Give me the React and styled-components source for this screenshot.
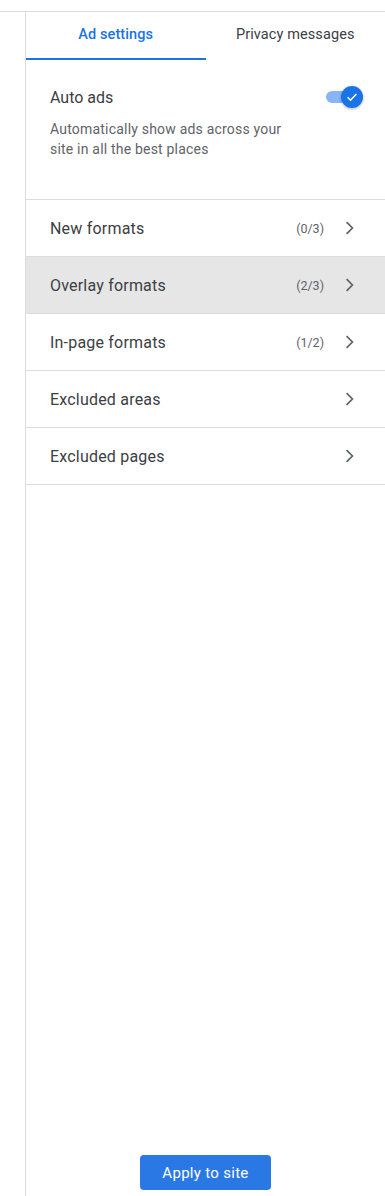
import React from "react";
import styled, { createGlobalStyle } from "styled-components";

const GlobalStyle = createGlobalStyle`
  html, body {
    margin: 0;
    padding: 0;
    background: #fff;
    font-family: Roboto, "Liberation Sans", Arial, sans-serif;
  }
`;

const rows = [
  { title: "New formats", count: "(0/3)" },
  { title: "Overlay formats", count: "(2/3)", active: true },
  { title: "In-page formats", count: "(1/2)" },
  { title: "Excluded areas" },
  { title: "Excluded pages" },
];

const Chevron = () => (
  <svg width="24" height="24" viewBox="0 0 24 24">
    <path d="M8.6 6.2 L14.4 12 L8.6 17.8" fill="none" stroke="#5f6368" strokeWidth="1.7" />
  </svg>
);

export const App = () => {
  return (
    <Page>
      <GlobalStyle />
      <Gutter />
      <Panel>
        <Tabs>
          <Tab active>Ad settings</Tab>
          <Tab>Privacy messages</Tab>
        </Tabs>
        <AutoAds>
          <div className="head">
            <div className="title">Auto ads</div>
            <Toggle>
              <div className="track" />
              <div className="thumb">
                <svg width="14" height="14" viewBox="0 0 24 24">
                  <path d="M4.5 12.5 L9.5 17.5 L19.5 7" fill="none" stroke="#fff" strokeWidth="2.6" />
                </svg>
              </div>
            </Toggle>
          </div>
          <div className="desc">
            Automatically show ads across your
            <br />
            site in all the best places
          </div>
        </AutoAds>
        <List>
          {rows.map((r) => (
            <Row key={r.title} active={r.active}>
              <span className="title">{r.title}</span>
              {r.count && <span className="count">{r.count}</span>}
              <Chevron />
            </Row>
          ))}
        </List>
        <Footer>
          <ApplyButton>Apply to site</ApplyButton>
        </Footer>
      </Panel>
    </Page>
  );
};
export default App;

const Page = styled.div`
  display: flex;
  height: 1184px;
  margin-top: 11px;
  border-top: 1px solid #dadce0;
`;

const Gutter = styled.div`
  width: 25px;
  flex-shrink: 0;
  border-right: 1px solid #dadce0;
`;

const Panel = styled.div`
  flex: 1;
  display: flex;
  flex-direction: column;
  min-width: 0;
`;

const Tabs = styled.div`
  display: flex;
  height: 48px;
`;

const Tab = styled.div`
  flex: 1;
  display: flex;
  align-items: center;
  justify-content: center;
  padding-bottom: 1px;
  font-size: 14.5px;
  font-weight: ${(p) => (p.active ? 500 : 400)};
  letter-spacing: 0.1px;
  color: ${(p) => (p.active ? "#1a73e8" : "#3c4043")};
  border-bottom: 2px solid ${(p) => (p.active ? "#1a73e8" : "transparent")};
`;

const AutoAds = styled.div`
  padding: 27px 22px 0 24px;
  height: 140px;
  box-sizing: border-box;
  border-bottom: 1px solid #dadce0;

  .head {
    display: flex;
    align-items: center;
    justify-content: space-between;
    height: 20px;
  }

  .title {
    font-size: 16px;
    color: #3c4043;
  }

  .desc {
    margin-top: 12px;
    font-size: 14px;
    line-height: 20px;
    color: #5f6368;
    letter-spacing: 0.2px;
  }
`;

const Toggle = styled.div`
  position: relative;
  width: 38px;
  height: 22px;

  .track {
    position: absolute;
    left: 1px;
    top: 5px;
    width: 30px;
    height: 12px;
    border-radius: 6px;
    background: #8ab4f8;
  }

  .thumb {
    position: absolute;
    right: 0;
    top: 0;
    width: 22px;
    height: 22px;
    border-radius: 50%;
    background: #1a73e8;
    box-shadow: 0 1px 3px rgba(0, 0, 0, 0.3);
    display: flex;
    align-items: center;
    justify-content: center;
  }
`;

const List = styled.div`
  display: flex;
  flex-direction: column;
`;

const Row = styled.div`
  display: flex;
  align-items: center;
  height: 56px;
  padding: 0 23px 0 24px;
  border-bottom: 1px solid #dadce0;
  background: ${(p) => (p.active ? "#e6e6e6" : "transparent")};

  .title {
    flex: 1;
    font-size: 16px;
    color: #3c4043;
    letter-spacing: 0.2px;
  }

  .count {
    font-size: 12.5px;
    color: #5f6368;
    margin-right: 14px;
  }
`;

const Footer = styled.div`
  flex: 1;
  display: flex;
  align-items: flex-end;
  justify-content: center;
  padding-bottom: 6px;
`;

const ApplyButton = styled.button`
  width: 131px;
  height: 35px;
  border: none;
  border-radius: 4px;
  background: #2a78e4;
  color: #fff;
  font-family: Roboto, "Liberation Sans", Arial, sans-serif;
  font-size: 15px;
  font-weight: 400;
  letter-spacing: 0.3px;
  cursor: pointer;
`;
